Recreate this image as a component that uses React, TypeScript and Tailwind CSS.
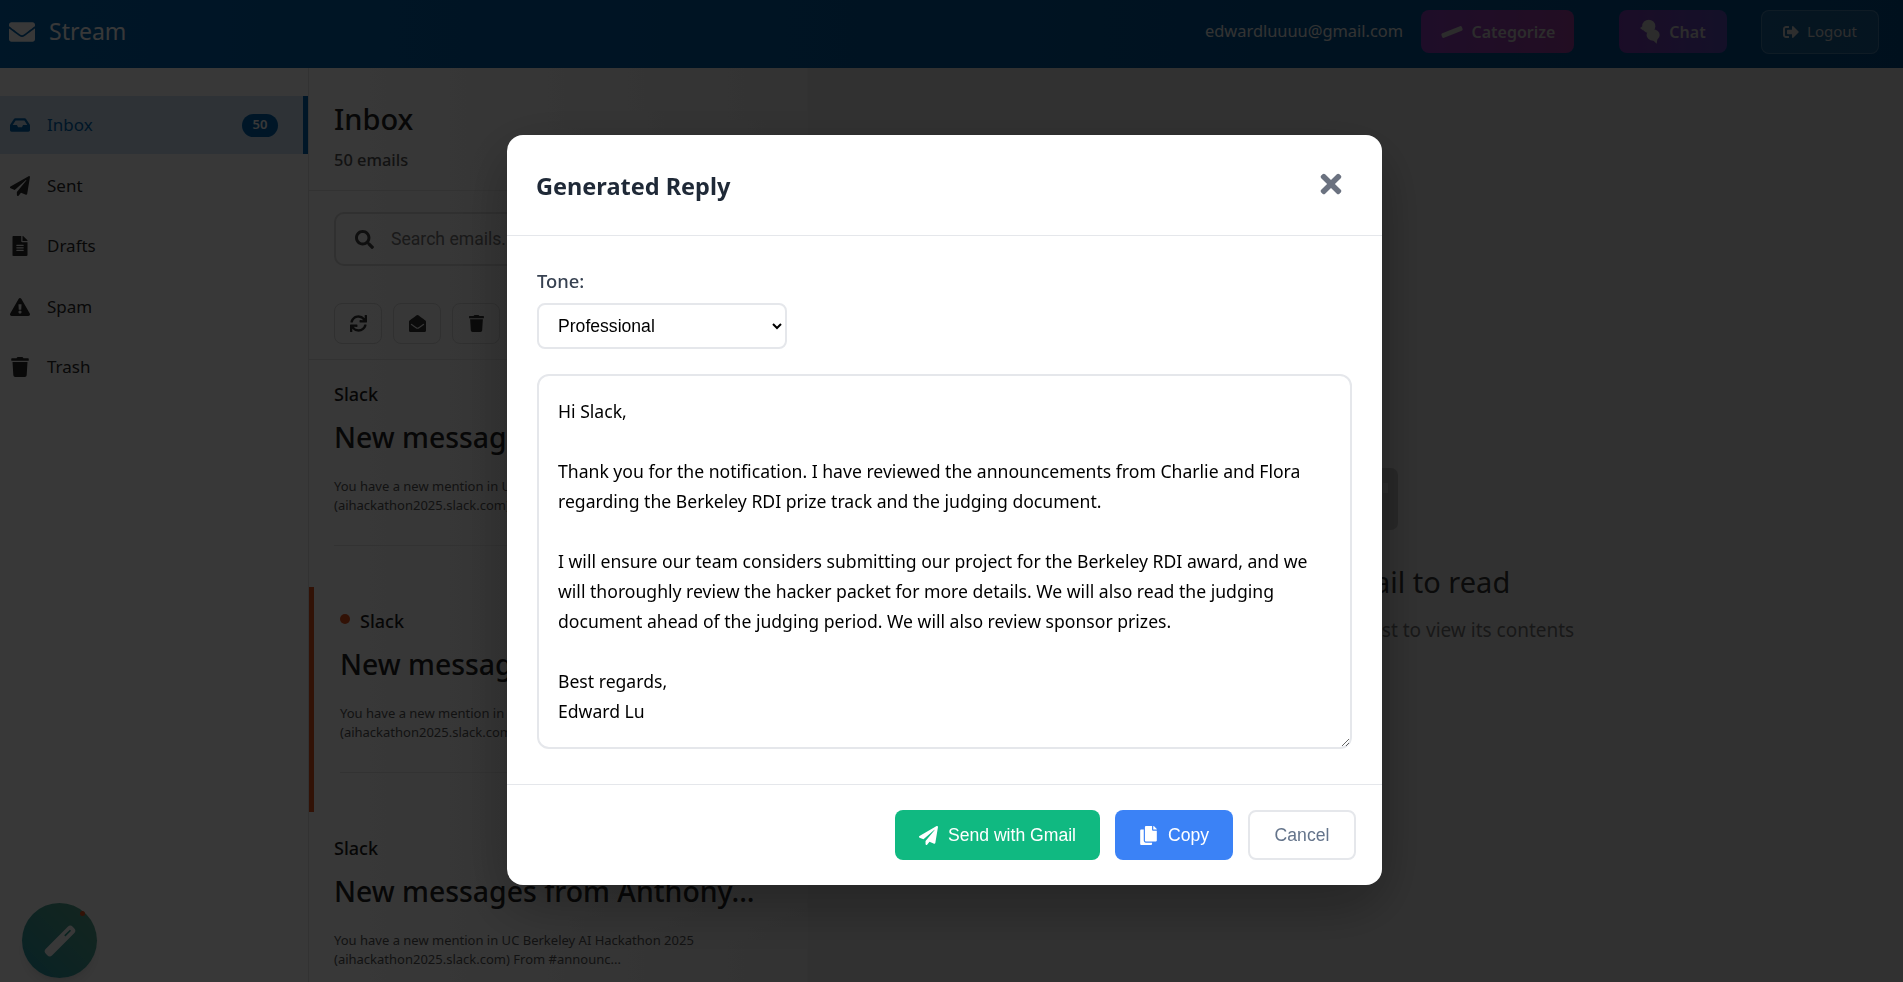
import {
  FaEnvelope,
  FaInbox,
  FaPaperPlane,
  FaFileAlt,
  FaExclamationTriangle,
  FaTrash,
  FaSearch,
  FaSync,
  FaEnvelopeOpen,
  FaSignOutAlt,
  FaTimes,
  FaCopy,
} from "react-icons/fa";

const navItems = [
  { label: "Inbox", icon: FaInbox, active: true },
  { label: "Sent", icon: FaPaperPlane },
  { label: "Drafts", icon: FaFileAlt },
  { label: "Spam", icon: FaExclamationTriangle },
  { label: "Trash", icon: FaTrash },
];

const reply = `Hi Slack,

Thank you for the notification. I have reviewed the announcements from Charlie and Flora regarding the Berkeley RDI prize track and the judging document.

I will ensure our team considers submitting our project for the Berkeley RDI award, and we will thoroughly review the hacker packet for more details. We will also read the judging document ahead of the judging period. We will also review sponsor prizes.

Best regards,
Edward Lu`;

function HeaderWand() {
  return (
    <svg viewBox="0 0 24 24" className="w-[24px] h-[24px]">
      <rect x="-11" y="-2.4" width="22" height="4.8" rx="1.5" transform="translate(12 12) rotate(-22)" fill="currentColor" />
    </svg>
  );
}

function FabWand() {
  return (
    <svg viewBox="0 0 42 42" className="w-[42px] h-[42px]">
      <g transform="translate(21 21) rotate(-45)">
        <rect x="-19" y="-4.5" width="38" height="9" rx="3.5" fill="currentColor" />
        <rect x="7" y="-1" width="8" height="1.6" fill="#2a9d8f" />
      </g>
    </svg>
  );
}

function ChatBlobs() {
  return (
    <svg viewBox="0 0 24 30" className="w-[21px] h-[27px] text-[#c8c8c8]">
      <ellipse cx="10" cy="9" rx="7.5" ry="7.5" fill="currentColor" />
      <path d="M3 9 L0 11 L4 14 Z" fill="currentColor" />
      <ellipse cx="15" cy="19" rx="7.5" ry="6.5" fill="currentColor" />
      <path d="M14 24 L19 29 L20 23 Z" fill="currentColor" />
    </svg>
  );
}

function EmptyIcon() {
  return (
    <svg viewBox="0 0 84 62" className="w-[84px] h-[62px]">
      <rect x="0" y="0" width="84" height="62" rx="7" fill="#b8b8b8" />
      <rect x="69" y="15" width="5" height="10" fill="#cfcfcf" />
    </svg>
  );
}

function EmailItem({ unread, title }: { unread?: boolean; title: string }) {
  return (
    <div className={unread ? "border-l-[5px] border-[#e2511f] pl-[26px] pr-6 h-[225px] pt-[22px] mb-[2px]" : "pl-[25px] pr-6 pt-[22px] h-[227px]"}>
      <div className="flex items-center h-[24px] text-[18px] font-medium text-[#1f1f1f]">
        {unread && <span className="w-[10px] h-[10px] rounded-full bg-[#e2511f] mr-[10px] -mt-1"></span>}
        Slack
      </div>
      <div className="mt-[13px] text-[28.4px] leading-[36px] font-medium text-[#222] whitespace-nowrap">{title}</div>
      <p className="mt-[22px] text-[13px] leading-[19px] text-[#555] w-[400px]">
        You have a new mention in UC Berkeley AI Hackathon 2025 (aihackathon2025.slack.com) From #announc...
      </p>
      {!title.includes("Anthony") && <div className="mt-[30px] border-b border-[#e5e5e5]"></div>}
    </div>
  );
}

export default function App() {
  return (
    <div className="h-screen overflow-hidden flex flex-col bg-white font-['Noto_Sans',sans-serif]">
      <header className="h-[68px] shrink-0 flex items-center pb-[5px] bg-gradient-to-r from-[#0064b0] to-[#004c86] text-white">
        <FaEnvelope className="ml-[9px] w-[26px] h-[26px]" />
        <span className="ml-[14px] text-[23px]">Stream</span>
        <span className="ml-auto text-[16.4px] text-[#e8e8e8]">edwardluuuu@gmail.com</span>
        <button className="ml-[18px] w-[153px] h-[43px] rounded-lg bg-gradient-to-r from-[#8a3cb8] to-[#9a3c9c] flex items-center justify-center gap-2 font-semibold text-[#c8c8c8]">
          <HeaderWand />
          Categorize
        </button>
        <button className="ml-[45px] w-[108px] h-[43px] rounded-lg bg-gradient-to-r from-[#7a3ab0] to-[#5a4ab8] flex items-center justify-center gap-2 font-semibold text-[#c8c8c8]">
          <ChatBlobs />
          Chat
        </button>
        <button className="ml-[34px] mr-[24px] w-[118px] h-[44px] rounded-lg bg-white/10 border border-white/20 flex items-center justify-center gap-2 text-[15px] text-[#cfcfcf]">
          <FaSignOutAlt className="w-[16px] h-[16px]" />
          Logout
        </button>
      </header>

      <div className="flex-1 flex min-h-0">
        <aside className="w-[309px] shrink-0 border-r border-[#e5e5e5] pt-[28px] flex flex-col gap-[2.5px]">
          {navItems.map((item) => {
            const Icon = item.icon;
            return (
              <div
                key={item.label}
                className={
                  item.active
                    ? "h-[58px] flex items-center pl-[10px] pr-[25px] bg-[#cfe4f4] border-r-[5px] border-[#0066b3] text-[#0066b3]"
                    : "h-[58px] flex items-center pl-[10px] pr-[30px] text-[#2a2a2a]"
                }
              >
                <Icon className="w-[20px] h-[20px]" />
                <span className="ml-[17px] text-[17px]">{item.label}</span>
                {item.active && (
                  <span className="ml-auto w-[36px] h-[23px] rounded-full bg-[#0066b3] text-white text-[13px] font-semibold flex items-center justify-center">
                    50
                  </span>
                )}
              </div>
            );
          })}
        </aside>

        <section className="w-[499px] shrink-0 border-r border-[#e5e5e5] overflow-hidden bg-gradient-to-r from-white to-[#e6e6e6]">
          <div className="h-[123px] pl-[25px] pt-[28px] border-b border-[#e5e5e5]">
            <h1 className="text-[29px] leading-[46px] font-medium text-[#222]">Inbox</h1>
            <div className="text-[16.4px] leading-[24px] font-medium text-[#555] mt-[6px]">50 emails</div>
          </div>
          <div className="px-[25px] pt-[21px]">
            <div className="h-[54px] border-2 border-[#d9d9d9] rounded-[10px] flex items-center pl-[19px]">
              <FaSearch className="w-[19px] h-[19px] text-[#444]" />
              <span className="ml-[17px] font-['Roboto',sans-serif] text-[17.6px] text-[#757575]">Search emails...</span>
            </div>
          </div>
          <div className="h-[94px] px-[25px] pt-[37px] border-b border-[#e5e5e5] flex gap-[11px]">
            {[FaSync, FaEnvelopeOpen, FaTrash].map((Icon, i) => (
              <div key={i} className="w-[48px] h-[41px] border border-[#d9d9d9] rounded-lg flex items-center justify-center text-[#333]">
                <Icon className="w-[17px] h-[17px]" />
              </div>
            ))}
          </div>
          <EmailItem title="New messages from Anna..." />
          <EmailItem unread title="New messages from Flora..." />
          <EmailItem title="New messages from Anthony..." />
        </section>

        <main className="flex-1 flex flex-col items-center pt-[400px] bg-[#e0e0e0]">
          <EmptyIcon />
          <h2 className="mt-[30px] text-[29px] leading-[44px] text-[#333]">Select an email to read</h2>
          <p className="mt-[12px] text-[19px] text-[#707070]">Choose an email from the list to view its contents</p>
        </main>
      </div>

      <button className="fixed left-[22px] top-[903px] w-[75px] h-[75px] rounded-full shadow-lg bg-gradient-to-tr from-[#1f9aa8] to-[#5aa88a] flex items-center justify-center text-white">
        <FabWand />
        <span className="absolute right-[12px] top-[8px] w-[5px] h-[5px] rounded-full bg-[#e2511f]"></span>
      </button>

      <div className="fixed inset-0 bg-black/[.78] pt-[135px] pl-[507px]">
        <div className="w-[875px] h-[750px] bg-white rounded-2xl shadow-[0_20px_60px_rgba(0,0,0,0.3)] flex flex-col overflow-hidden">
          <div className="h-[101px] shrink-0 border-b border-[#e5e7eb] flex items-center justify-between px-[30px]">
            <h3 className="text-[23.5px] font-bold text-[#1f2937] -ml-[1px] mt-[4px]">Generated Reply</h3>
            <FaTimes className="w-[30px] h-[30px] text-[#6b7280] -mt-[2px] mr-[6px]" />
          </div>
          <div className="flex-1 px-[30px] pt-[30px]">
            <label className="block text-[18.4px] leading-[30px] font-medium text-[#374151]">Tone:</label>
            <select className="mt-[7px] block w-[250px] h-[46px] border-2 border-[#e5e7eb] rounded-lg px-[15px] font-['Liberation_Sans',sans-serif] text-[17.6px] text-black bg-white">
              <option>Professional</option>
            </select>
            <textarea
              readOnly
              value={reply}
              className="mt-[25px] block w-[815px] h-[375px] border-2 border-[#e5e7eb] rounded-xl px-[19px] py-[20px] text-[17.6px] leading-[30px] text-black outline-none"
            />
          </div>
          <div className="h-[101px] shrink-0 border-t border-[#e5e7eb] flex items-start justify-end gap-[15px] pt-[25px] pr-[26px] font-['Liberation_Sans',sans-serif] text-[17.6px]">
            <button className="w-[205px] h-[50px] rounded-lg bg-[#10b981] text-white font-medium flex items-center justify-center gap-[10px]">
              <FaPaperPlane className="w-[19px] h-[19px]" />
              Send with Gmail
            </button>
            <button className="w-[118px] h-[50px] rounded-lg bg-[#3b82f6] text-white font-medium flex items-center justify-center gap-[10px]">
              <FaCopy className="w-[19px] h-[19px]" />
              Copy
            </button>
            <button className="w-[108px] h-[50px] rounded-lg bg-white border-2 border-[#e5e7eb] text-[#64748b]">Cancel</button>
          </div>
        </div>
      </div>
    </div>
  );
}
